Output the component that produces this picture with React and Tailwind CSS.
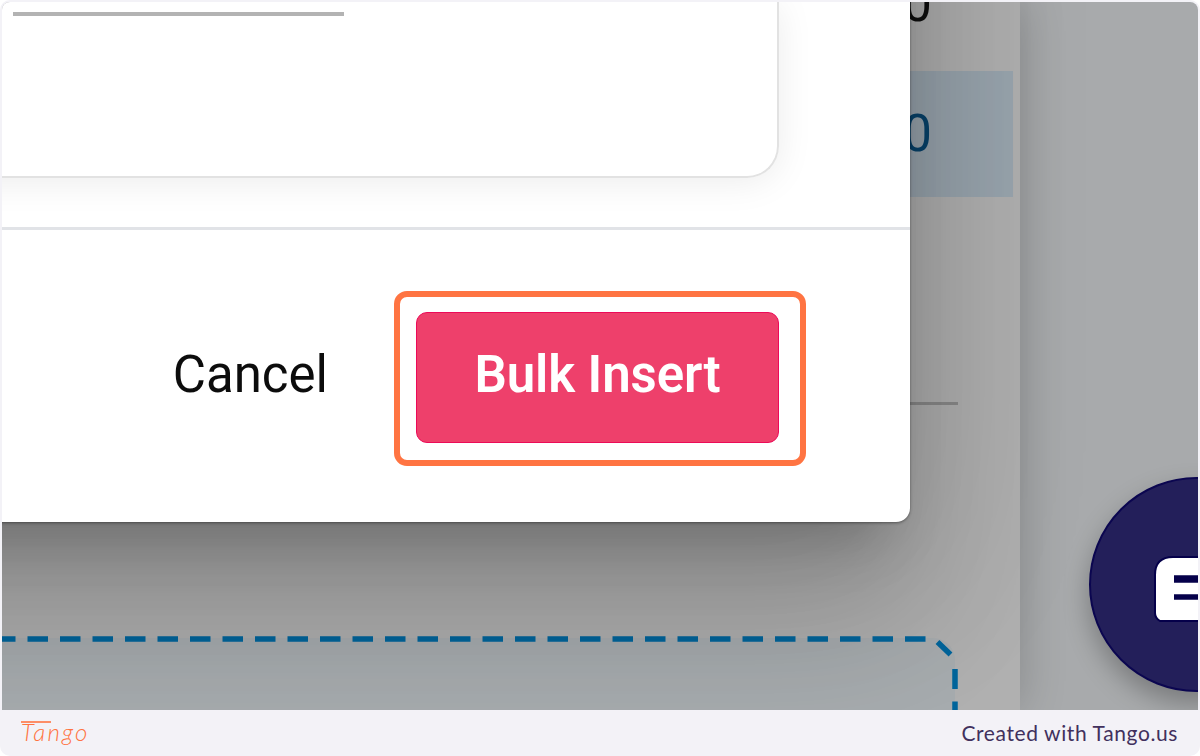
const ROWS = [
  { value: '0', className: 'h-[69px] text-[#101010] items-end pb-[42px]' },
  { value: '0', className: 'h-[126px] text-[#08436c] bg-[#99a5ae] items-center pb-[1px]' },
];

// Dash marks of the drop zone, from left to right
const DASHES = Array.from({ length: 29 }, (_, i) => -7 + i * 32.5);

function DropZone() {
  return (
    <div className="relative w-[956px] h-[75px] mt-auto">
      <div className="w-[953px] h-[72px] mt-[3px] bg-[#a7acaf] rounded-tr-[22px]" />
      <svg className="absolute inset-0" width="956" height="75" fill="none" stroke="#00659c" strokeWidth="5.5">
        {DASHES.map((x) => (
          <path key={x} d={`M${x} 4h20.5`} />
        ))}
        <path d="M935.5 7l13 12.5" />
        <path d="M953 34v20M953 66.5v14" />
      </svg>
    </div>
  );
}

function Background() {
  return (
    <div className="flex h-full">
      <section className="w-[1018px] h-full bg-[#b0b0b0] flex flex-col shadow-[0_0_44px_rgba(0,0,0,0.2)] z-0">
        {ROWS.map((row, i) => (
          <div
            key={i}
            className={`flex justify-end w-[1011px] pr-[81px] text-[51px] leading-none ${row.className}`}
          >
            {row.value}
          </div>
        ))}
        <div className="w-[956px] h-[3px] mt-[205px] bg-[#8a8a8a]" />
        <DropZone />
      </section>
      <section className="flex-1 bg-[#a8aaac]" />
    </div>
  );
}

function Dialog() {
  return (
    <div className="absolute right-[288px] bottom-[188px] w-[1500px] h-[1100px] bg-white rounded-br-[14px] flex flex-col justify-end shadow-[0_40px_54px_-25px_rgba(0,0,0,0.2),0_87px_138px_11px_rgba(0,0,0,0.14),0_33px_167px_29px_rgba(0,0,0,0.12),0_1px_3px_rgba(0,0,0,0.4)]">
      <div className="h-[225px] pr-[131px]">
        <div className="h-[176px] border-r-2 border-b-2 border-[#e2e2e2] rounded-br-[32px] shadow-[0_4px_36px_rgba(0,0,0,0.08)] pt-[10px] pr-[433px] flex justify-end">
          <div className="w-[331px] h-[4px] bg-[#b3b3b3]" />
        </div>
      </div>
      <div className="h-[3px] bg-[#e1e3e7]" />
      <div className="h-[292px] flex justify-end items-start pt-[61px] pr-[104px]">
        <button className="h-[175px] mr-[66px] pb-[9px] text-[51px] leading-none text-[#0c0c0c]">
          Cancel
        </button>
        <div className="w-[412px] h-[175px] border-[6px] border-[#ff7442] rounded-[13px] pl-[16px] pt-[15px]">
          <button className="w-[363px] h-[131px] bg-[#ee406b] border border-[#ec0a58] rounded-[11px] pb-[6px] text-[51px] leading-none font-semibold tracking-[-0.1px] text-white">
            Bulk Insert
          </button>
        </div>
      </div>
    </div>
  );
}

function ChatButton() {
  return (
    <button className="absolute left-[1087px] top-[475px] size-[215px] rounded-full bg-[#231f5a] border-2 border-[#0b0650] shadow-[0_12px_26px_rgba(0,0,0,0.28)]">
      <svg className="ml-[63px] mt-[8px]" width="86" height="66" viewBox="0 0 86 66">
        <path
          d="M19 1H68Q85 1 85 19V65H6Q1 62 1 57V19Q1 1 19 1Z"
          fill="#fff"
          stroke="#05004a"
          strokeWidth="2"
        />
        <path d="M20 23H65" stroke="#05004a" strokeWidth="7.5" />
        <path d="M20 41H65" stroke="#05004a" strokeWidth="5.5" />
      </svg>
    </button>
  );
}

function Footer() {
  return (
    <footer className="h-[46px] flex items-center justify-between pl-[19px] pr-[20px] font-['Lato',sans-serif]">
      <div className="relative w-[70px] h-[46px] text-[#ff7442]">
        <span className="block text-[24px] leading-[44px] italic font-light tracking-[2.2px]">Tango</span>
        <span className="absolute left-0 top-[11px] w-[30px] h-[2px] bg-[#ff7442]/80" />
      </div>
      <span className="text-[21px] leading-[44px] tracking-[0.6px] text-[#41305d]">Created with Tango.us</span>
    </footer>
  );
}

export default function App() {
  return (
    <div className="w-[1200px] h-[756px] bg-white overflow-hidden">
      <div className="w-full h-full bg-[#f3f2f7] rounded-[10px] px-[2px] pt-[2px] overflow-hidden">
        <main className="relative h-[708px] overflow-hidden rounded-t-[8px] font-['Roboto',sans-serif]">
          <Background />
          <Dialog />
          <ChatButton />
        </main>
        <Footer />
      </div>
    </div>
  );
}
